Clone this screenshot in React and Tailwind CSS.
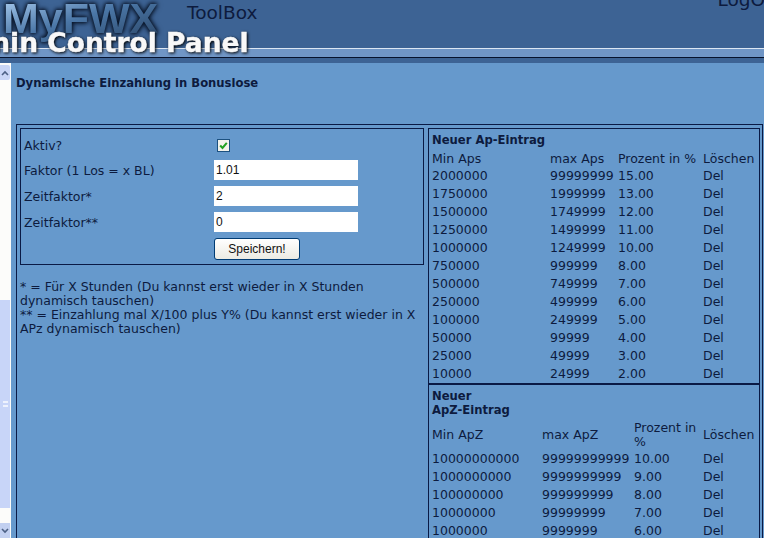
import React from "react";

const apRows = [
  ["2000000", "99999999", "15.00"],
  ["1750000", "1999999", "13.00"],
  ["1500000", "1749999", "12.00"],
  ["1250000", "1499999", "11.00"],
  ["1000000", "1249999", "10.00"],
  ["750000", "999999", "8.00"],
  ["500000", "749999", "7.00"],
  ["250000", "499999", "6.00"],
  ["100000", "249999", "5.00"],
  ["50000", "99999", "4.00"],
  ["25000", "49999", "3.00"],
  ["10000", "24999", "2.00"],
];

const apzRows = [
  ["10000000000", "99999999999", "10.00"],
  ["1000000000", "9999999999", "9.00"],
  ["100000000", "999999999", "8.00"],
  ["10000000", "99999999", "7.00"],
  ["1000000", "9999999", "6.00"],
];

function Scrollbar() {
  return (
    <div className="w-[11px] shrink-0 bg-[#fcfcfa] pt-[2px] flex flex-col">
      <div className="h-[15px] w-[10px] bg-[#c9d6f6] rounded-r-[2px] flex items-center justify-center">
        <svg width="8" height="6" viewBox="0 0 8 6">
          <path d="M1 5 L4 2 L7 5" fill="none" stroke="#4d6185" strokeWidth="1.6" />
        </svg>
      </div>
      <div className="h-[220px]"></div>
      <div className="h-[208px] w-[10px] bg-[#c8d5f8] flex items-center justify-center">
        <div className="w-[5px] h-[6px] border-y-2 border-[#eef2fd]"></div>
      </div>
      <div className="h-[15px]"></div>
      <div className="h-[15px] w-[10px] bg-[#c2d0f0] flex items-center justify-center">
        <svg width="8" height="6" viewBox="0 0 8 6">
          <path d="M1 1 L4 4 L7 1" fill="none" stroke="#4d6185" strokeWidth="1.6" />
        </svg>
      </div>
    </div>
  );
}

function FormRow({ label, value }) {
  return (
    <div className="flex items-center h-[26px]">
      <span className="w-[190px] mt-[1px]">{label}</span>
      <input
        readOnly
        value={value}
        className="w-[144px] h-[20px] bg-white px-[2px] text-[12px] text-[#111] outline-none font-['Liberation_Sans',sans-serif]"
      />
    </div>
  );
}

export default function App() {
  return (
    <div className="relative w-[764px] h-[538px] overflow-hidden bg-[#6699cc] text-[12.5px] leading-[14px] text-[#0d1b3e] font-['DejaVu_Sans',sans-serif]">
      <div className="relative h-[48px] bg-[#3d6394] flex justify-between text-[18.5px] leading-[22px]">
        <span className="ml-[187px] mt-[2px]">ToolBox</span>
        <span className="mr-[-20px] mt-[-11px]">LogOut</span>
      </div>
      <div className="h-[10px] bg-[#7096c6] border-t border-t-[#dce6f2] border-b border-b-[#06122c]"></div>
      <div className="h-[5px] bg-[#3d6394]"></div>

      {/* logo lies over the header bars */}
      <div className="absolute left-[3px] top-[-6px] text-[43px] leading-[48px] font-bold font-['Liberation_Sans',sans-serif] text-transparent bg-clip-text bg-gradient-to-br from-[#b4d6f8] via-[#4a76a6] to-[#2a4566] [filter:drop-shadow(0_0_2px_#081428)_drop-shadow(0_0_2px_#081428)]">
        MyFWX
      </div>
      <div className="absolute left-[-57px] top-[27px] whitespace-nowrap text-[26.5px] leading-[32px] font-bold text-[#f8f8f8] [-webkit-text-stroke:0.4px_#f8f8f8] drop-shadow-[1px_1px_1.5px_#000]">
        Admin Control Panel
      </div>

      <div className="flex h-[475px]">
        <Scrollbar />
        <div className="flex-1 pl-[5px] pr-[1px]">
          <h1 className="mt-[13px] h-[14px] font-bold text-[11.6px] leading-[14px]">Dynamische Einzahlung in Bonuslose</h1>

          <div className="mt-[34px] h-[500px] border border-[#0a1a45] pl-[3px] pr-[2px] pt-[3px] flex gap-[4px]">
            <div className="w-[404px] shrink-0">
              <div className="h-[137px] border border-[#0a1a45] pl-[3px] pt-[4px]">
                <div className="flex items-center h-[24px]">
                  <span className="w-[193px] mt-[1px]">Aktiv?</span>
                  <span className="w-[13px] h-[13px] border border-[#1c5180] bg-[#f2f2ea] flex items-center justify-center">
                    <svg width="9" height="9" viewBox="0 0 9 9">
                      <path d="M1.2 4.5 L3.5 7 L7.8 1.8" fill="none" stroke="#21a121" strokeWidth="2" />
                    </svg>
                  </span>
                </div>
                <FormRow label="Faktor (1 Los = x BL)" value="1.01" />
                <FormRow label="Zeitfaktor*" value="2" />
                <FormRow label="Zeitfaktor**" value="0" />
                <div className="ml-[190px] mt-[3px]">
                  <button className="w-[86px] h-[22px] bg-gradient-to-b from-white to-[#ecebe3] border border-[#003c74] rounded-[3px] text-[12px] text-[#111] font-['Liberation_Sans',sans-serif]">
                    Speichern!
                  </button>
                </div>
              </div>
              <p className="mt-[15px] w-[404px]">
                * = Für X Stunden (Du kannst erst wieder in X Stunden dynamisch tauschen)
                <br />
                ** = Einzahlung mal X/100 plus Y% (Du kannst erst wieder in X APz dynamisch tauschen)
              </p>
            </div>

            <div className="w-[332px] shrink-0 border border-[#0a1a45]">
              <div className="h-[254px] pl-[3px] pt-[4px]">
                <div className="h-[14px] font-bold text-[11.6px]">Neuer Ap-Eintrag</div>
                <div className="grid grid-cols-[118px_68px_85px_1fr] h-[17px] items-center mt-[3px]">
                  <span>Min Aps</span>
                  <span>max Aps</span>
                  <span>Prozent in %</span>
                  <span>Löschen</span>
                </div>
                {apRows.map((row) => (
                  <div key={row[0]} className="grid grid-cols-[118px_68px_85px_1fr] h-[18px] items-center">
                    <span>{row[0]}</span>
                    <span>{row[1]}</span>
                    <span>{row[2]}</span>
                    <span>Del</span>
                  </div>
                ))}
              </div>
              <div className="h-[2px] bg-[#0a1a45]"></div>
              <div className="pl-[3px] pt-[4px]">
                <div className="font-bold text-[11.6px]">
                  Neuer
                  <br />
                  ApZ-Eintrag
                </div>
                <div className="grid grid-cols-[110px_92px_69px_1fr] h-[31px] items-center mt-[2px]">
                  <span>Min ApZ</span>
                  <span>max ApZ</span>
                  <span className="w-[66px]">Prozent in %</span>
                  <span>Löschen</span>
                </div>
                {apzRows.map((row) => (
                  <div key={row[0]} className="grid grid-cols-[110px_92px_69px_1fr] h-[18px] items-center">
                    <span>{row[0]}</span>
                    <span>{row[1]}</span>
                    <span>{row[2]}</span>
                    <span>Del</span>
                  </div>
                ))}
              </div>
            </div>
          </div>
        </div>
      </div>
    </div>
  );
}
